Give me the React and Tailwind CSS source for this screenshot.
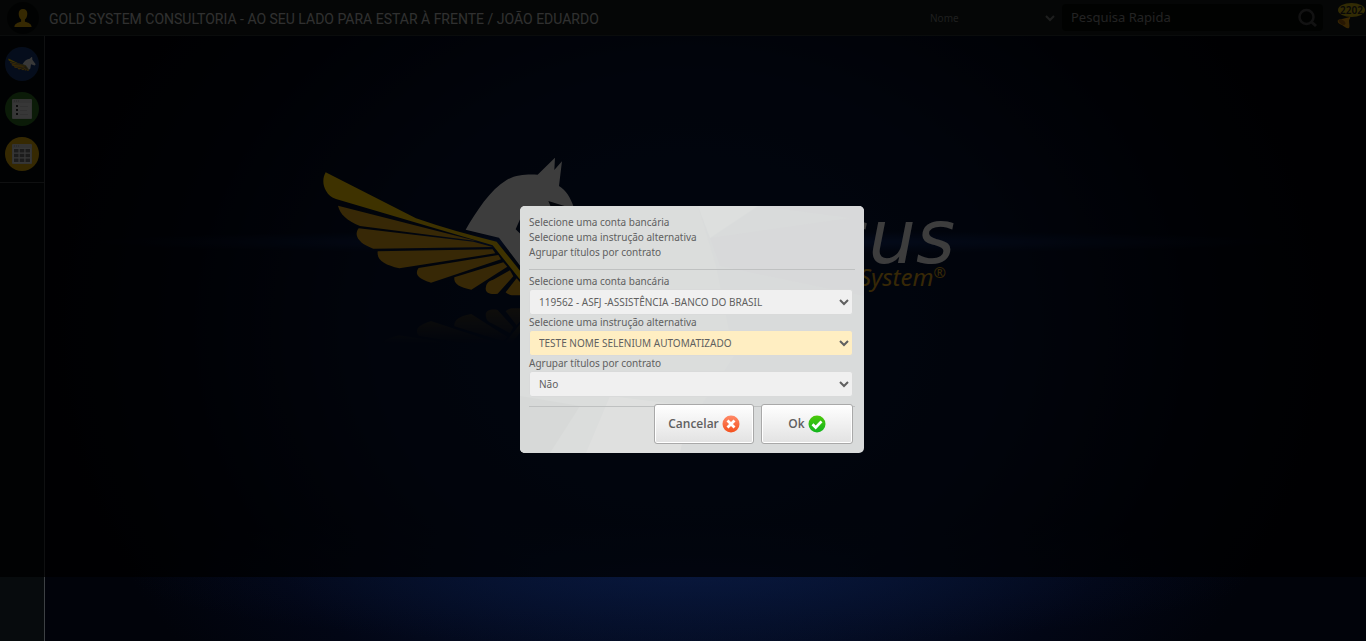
import React from 'react';

const FEATHERS = [
  'M84 197 L500 303 L150 258 C110 242 90 222 84 197Z',
  'M146 265 L490 305 L548 321 L190 326 C152 314 128 288 146 265Z',
  'M203 334 L548 328 L556 340 L268 385 C225 375 200 362 203 334Z',
  'M326 384 L565 345 L573 358 L363 428 C332 418 310 406 326 384Z',
  'M433 412 L580 367 L592 380 L484 449 C450 443 430 432 433 412Z',
  'M600 391 L610 409 L563 461 C540 465 523 458 528 440 C530 428 540 422 548 420Z',
  'M620 415 L664 466 L610 466 C600 466 592 462 587 457Z',
];

function Wing() {
  return (
    <>
      {FEATHERS.map((d) => (
        <path key={d} d={d} fill="#d9a01a" />
      ))}
      <path
        d="M47 97 C37 115 38 135 48 152 C55 165 65 173 78 177 L548 316 L660 456 L660 430 L560 305 Q430 274 318 235Z"
        fill="#f5c800"
      />
    </>
  );
}

function Horse() {
  return (
    <>
      <path
        d="M467 269 C500 213 540 150 590 120 C620 103 650 103 683 104 L735 53 L733 90 L756 64 L747 138 C768 150 782 175 790 198 L790 215 L640 215 L617 268 L640 290 L640 390 L567 293Z"
        fill="#f4f4f4"
      />
      <path d="M715 183 L766 199 L724 204Z" fill="#0a1024" />
    </>
  );
}

function Backdrop() {
  return (
    <svg
      className="absolute inset-0 h-full w-full"
      viewBox="0 0 1366 641"
      preserveAspectRatio="xMidYMid slice"
      aria-hidden="true"
    >
      <defs>
        <radialGradient id="glow" gradientUnits="userSpaceOnUse" cx="0" cy="0" r="1" gradientTransform="translate(690 330) scale(640 520)">
          <stop offset="0" stopColor="#08183e" />
          <stop offset="0.5" stopColor="#061230" />
          <stop offset="0.8" stopColor="#020615" />
          <stop offset="1" stopColor="#01030a" />
        </radialGradient>
        <radialGradient id="floor" gradientUnits="userSpaceOnUse" cx="0" cy="0" r="1" gradientTransform="translate(690 575) scale(560 72)">
          <stop offset="0" stopColor="#0a1a42" stopOpacity="0.6" />
          <stop offset="1" stopColor="#061230" stopOpacity="0" />
        </radialGradient>
        <radialGradient id="flare" gradientUnits="userSpaceOnUse" cx="0" cy="0" r="1" gradientTransform="translate(690 242) scale(600 12)">
          <stop offset="0" stopColor="#1c48a8" stopOpacity="0.7" />
          <stop offset="1" stopColor="#0c2868" stopOpacity="0" />
        </radialGradient>
        <linearGradient id="fade" gradientUnits="userSpaceOnUse" x1="0" y1="490" x2="0" y2="610">
          <stop offset="0" stopColor="#fff" stopOpacity="0.3" />
          <stop offset="1" stopColor="#fff" stopOpacity="0" />
        </linearGradient>
        <mask id="fadeMask" maskUnits="userSpaceOnUse" x="0" y="480" width="800" height="200">
          <rect x="0" y="480" width="800" height="200" fill="url(#fade)" />
        </mask>
      </defs>
      <rect width="1366" height="641" fill="url(#glow)" />
      <rect y="500" width="1366" height="141" fill="url(#floor)" />
      <rect y="228" width="1366" height="28" fill="url(#flare)" />
      <g transform="translate(310 140) scale(0.3333)">
        <Horse />
        <Wing />
        <g mask="url(#fadeMask)">
          <g transform="translate(0 971) scale(1 -1)">
            <Wing />
          </g>
        </g>
      </g>
      <text x="955" y="263" textAnchor="end" fontFamily="DejaVu Sans, sans-serif" fontStyle="italic" fontSize="75" fill="#f4f4f4">
        sus
      </text>
      <text x="946" y="286" textAnchor="end" fontFamily="Noto Sans, sans-serif" fontStyle="italic" fontSize="24" fill="#d9a01a">
        System
        <tspan dy="-8" fontSize="15">®</tspan>
      </text>
    </svg>
  );
}

function WindowIcon({ children }) {
  return (
    <svg width="20" height="20" viewBox="0 0 20 20" aria-hidden="true">
      <rect width="20" height="20" rx="1" fill="#c9c9c9" />
      <rect x="1" y="4" width="18" height="15" fill="#dcdcdc" />
      <path d="M2 2h1M4 2h1M6 2h1" stroke="#999" />
      {children}
    </svg>
  );
}

function Sidebar() {
  const base = 'flex h-[34px] w-[34px] items-center justify-center rounded-full';
  return (
    <nav aria-label="Módulos" className="w-[45px] shrink-0 border-r border-[#3d4144] bg-[#070b0d]">
      <div className="flex flex-col items-center gap-[11px] border-b border-[#3d4144] pt-[11px] pb-[11px]">
        <button type="button" aria-label="Início" className={base + ' bg-[#17376f]'}>
          <svg width="28" height="16" viewBox="30 40 840 450" aria-hidden="true">
            <Wing />
            <path d="M467 271 C510 190 560 130 683 104 L735 53 L756 64 L760 138 L860 270 L830 310 L720 270 L700 400 L660 440 L565 300Z" fill="#e0e0e0" />
          </svg>
        </button>
        <button type="button" aria-label="Lista" className={base + ' bg-[#2c6b22]'}>
          <WindowIcon>
            <path d="M4 6h2v2h-2zM4 10h2v2h-2zM4 14h2v2h-2z" fill="#333" />
            <path d="M8 7.500h8M8 11.500h7M8 15.500h8" stroke="#c4c4c4" />
          </WindowIcon>
        </button>
        <button type="button" aria-label="Calendário" className={base + ' bg-[#d6a50a]'}>
          <WindowIcon>
            <path
              d="M2 5h4.500v3.500h-4.500zM7.700 5h4.600v3.500h-4.600zM13.500 5h4.500v3.500h-4.500zM2 9.700h4.500v3.500h-4.500zM7.700 9.700h4.600v3.500h-4.600zM13.500 9.700h4.500v3.500h-4.500zM2 14.400h4.500v3.500h-4.500zM7.700 14.400h4.600v3.500h-4.600zM13.500 14.400h4.500v3.500h-4.500z"
              fill="#707070"
            />
          </WindowIcon>
        </button>
      </div>
    </nav>
  );
}

function Header() {
  return (
    <header className="flex h-9 shrink-0 items-center border-b border-[#2b3033] bg-[#141b18] pl-[7px]">
      <button type="button" aria-label="Usuário" className="flex h-8 w-8 shrink-0 items-center justify-center rounded-full bg-[#070a09]">
        <svg width="18" height="18" viewBox="0 0 18 18" fill="#d6a50a" aria-hidden="true">
          <path d="M9 0C6.300 0 4.700 2 4.700 4.800c0 2.600 1 4.700 2.400 5.800v2.200C4 13.600.6 14.600.4 18h17.200c-.2-3.400-3.600-4.400-6.700-5.200v-2.200c1.400-1.100 2.400-3.200 2.400-5.800C13.300 2 11.700 0 9 0z" />
        </svg>
      </button>
      <h1 className="ml-[10px] flex-1 truncate pt-[3px] font-['Roboto',sans-serif] text-[14px] leading-5 text-[#c0c0c0]">
        GOLD SYSTEM CONSULTORIA - AO SEU LADO PARA ESTAR À FRENTE / JOÃO EDUARDO
      </h1>
      <select aria-label="Campo da pesquisa" defaultValue="Nome" className="h-6 w-[132px] bg-transparent text-[10px] text-[#787878]">
        <option>Nome</option>
      </select>
      <div className="ml-1 flex h-[27px] w-[261px] items-center rounded-sm bg-[#060807] pr-[5px] pl-[9px]">
        <input
          type="search"
          aria-label="Pesquisa Rapida"
          placeholder="Pesquisa Rapida"
          className="min-w-0 flex-1 bg-transparent text-[13px] text-[#8a8a8a] outline-none placeholder:text-[#8a8a8a]"
        />
        <button type="button" aria-label="Pesquisar">
          <svg width="20" height="20" viewBox="0 0 20 20" fill="none" stroke="#4a4a4a" strokeWidth="2.500" aria-hidden="true">
            <circle cx="8.500" cy="9" r="7" />
            <path d="M13.500 14l4.500 4" strokeWidth="3" />
          </svg>
        </button>
      </div>
      <button type="button" aria-label="Notificações: 2202" className="relative ml-3 h-8 w-[31px] shrink-0">
        <svg className="absolute bottom-[5px] left-[2px]" width="15" height="13" viewBox="0 0 15 13" aria-hidden="true">
          <path d="M1 4L13 1c1 1-1 2-1 4 0 3 1 5 0 7-2 1-4-1-7-3C2 8 0 6 1 4z" fill="#e0960f" />
          <ellipse cx="5" cy="6" rx="4" ry="2" transform="rotate(35 5 6)" fill="#9a5c08" />
        </svg>
        <span className="absolute top-[1px] right-[1px] flex h-[14px] w-[27px] items-center justify-center rounded-[50%] bg-[#c8ac10] text-[10px] leading-[14px] font-semibold text-[#222]">
          2202
        </span>
      </button>
    </header>
  );
}

function Field({ id, label, value, highlight }) {
  return (
    <div className="flex flex-col">
      <label htmlFor={id} className="leading-[15px]">
        {label}
      </label>
      <select
        id={id}
        defaultValue={value}
        className={
          'h-[26px] rounded-[3px] border border-[#d9dada] pl-[5px] text-[10px] text-[#606060] ' +
          (highlight ? 'bg-[#ffeec2]' : 'bg-[#f0f0f0]')
        }
      >
        <option>{value}</option>
      </select>
    </div>
  );
}

function DialogButton({ children, className }) {
  return (
    <button
      type="button"
      className={
        "flex h-10 items-center justify-center gap-[3px] rounded-[3px] border border-[#a9a9a9] bg-linear-to-b from-white to-[#e2e2e2] font-['Open_Sans',sans-serif] text-[12px] font-semibold text-[#606060] shadow-[inset_0_0_0_1px_#fff] " +
        className
      }
    >
      {children}
    </button>
  );
}

function BankDialog() {
  return (
    <section
      role="dialog"
      aria-label="Selecione uma conta bancária"
      className="relative w-[344px] overflow-hidden rounded-[5px] bg-[#d9dbdb] px-[9px] py-[9px] text-[10px] text-[#606060]"
    >
      <svg className="absolute inset-0 h-full w-full" viewBox="0 0 344 247" preserveAspectRatio="none" aria-hidden="true">
        <path d="M0 0H178L196 60L214 150L150 247H0Z" fill="#dbdddc" />
        <path d="M178 0H238L190 32Z" fill="#dddfde" />
        <path d="M190 32L330 12L240 0H344V90L200 60Z" fill="#d8d9da" />
        <path d="M90 190L170 200L160 247H66Z" fill="#dfe0df" />
        <path d="M0 190L60 200L30 247H0Z" fill="#d7d9d8" />
      </svg>
      <div className="relative">
        <p className="leading-[15px]">Selecione uma conta bancária</p>
        <p className="leading-[15px]">Selecione uma instrução alternativa</p>
        <p className="leading-[15px]">Agrupar títulos por contrato</p>
        <hr className="mt-[9px] mb-1 border-[#bfc1c1]" />
        <form className="pr-[2px]" onSubmit={(e) => e.preventDefault()}>
          <Field id="conta" label="Selecione uma conta bancária" value="119562 - ASFJ -ASSISTÊNCIA -BANCO DO BRASIL" />
          <Field id="instrucao" label="Selecione uma instrução alternativa" value="TESTE NOME SELENIUM AUTOMATIZADO" highlight />
          <Field id="agrupar" label="Agrupar títulos por contrato" value="Não" />
        </form>
        <hr className="mt-[9px] border-[#bfc1c1]" />
        <div className="relative -mt-[3px] flex justify-end gap-[7px] pr-[2px]">
          <DialogButton className="w-[100px]">
            Cancelar
            <svg width="18" height="18" viewBox="0 0 18 18" aria-hidden="true">
              <defs>
                <linearGradient id="red" x1="0" y1="0" x2="0" y2="1">
                  <stop offset="0" stopColor="#ff8a68" />
                  <stop offset="1" stopColor="#f4511e" />
                </linearGradient>
              </defs>
              <circle cx="9" cy="9" r="8.500" fill="url(#red)" />
              <path d="M5.500 5.500l7 7M12.500 5.500l-7 7" stroke="#fff" strokeWidth="2.800" />
            </svg>
          </DialogButton>
          <DialogButton className="w-[92px]">
            Ok
            <svg width="18" height="18" viewBox="0 0 18 18" aria-hidden="true">
              <defs>
                <linearGradient id="green" x1="0" y1="0" x2="0" y2="1">
                  <stop offset="0" stopColor="#4cc90a" />
                  <stop offset="1" stopColor="#12b51e" />
                </linearGradient>
              </defs>
              <circle cx="9" cy="9" r="8.500" fill="url(#green)" />
              <path d="M4.500 9.200l3.200 3.200 5.800-6" fill="none" stroke="#fff" strokeWidth="2.800" />
            </svg>
          </DialogButton>
        </div>
      </div>
    </section>
  );
}

export default function App() {
  return (
    <div className="relative flex min-h-screen flex-col overflow-hidden bg-[#01030a] font-['Noto_Sans','Open_Sans',sans-serif]">
      <Backdrop />
      <div className="relative flex flex-1 flex-col">
        <Header />
        <div className="flex flex-1">
          <Sidebar />
          <main className="flex-1" />
        </div>
      </div>
      <div className="absolute inset-x-0 top-0 bottom-16 bg-black/75" />
      <div className="absolute inset-0 flex items-center justify-center pt-[18px] pl-[18px]">
        <BankDialog />
      </div>
    </div>
  );
}
